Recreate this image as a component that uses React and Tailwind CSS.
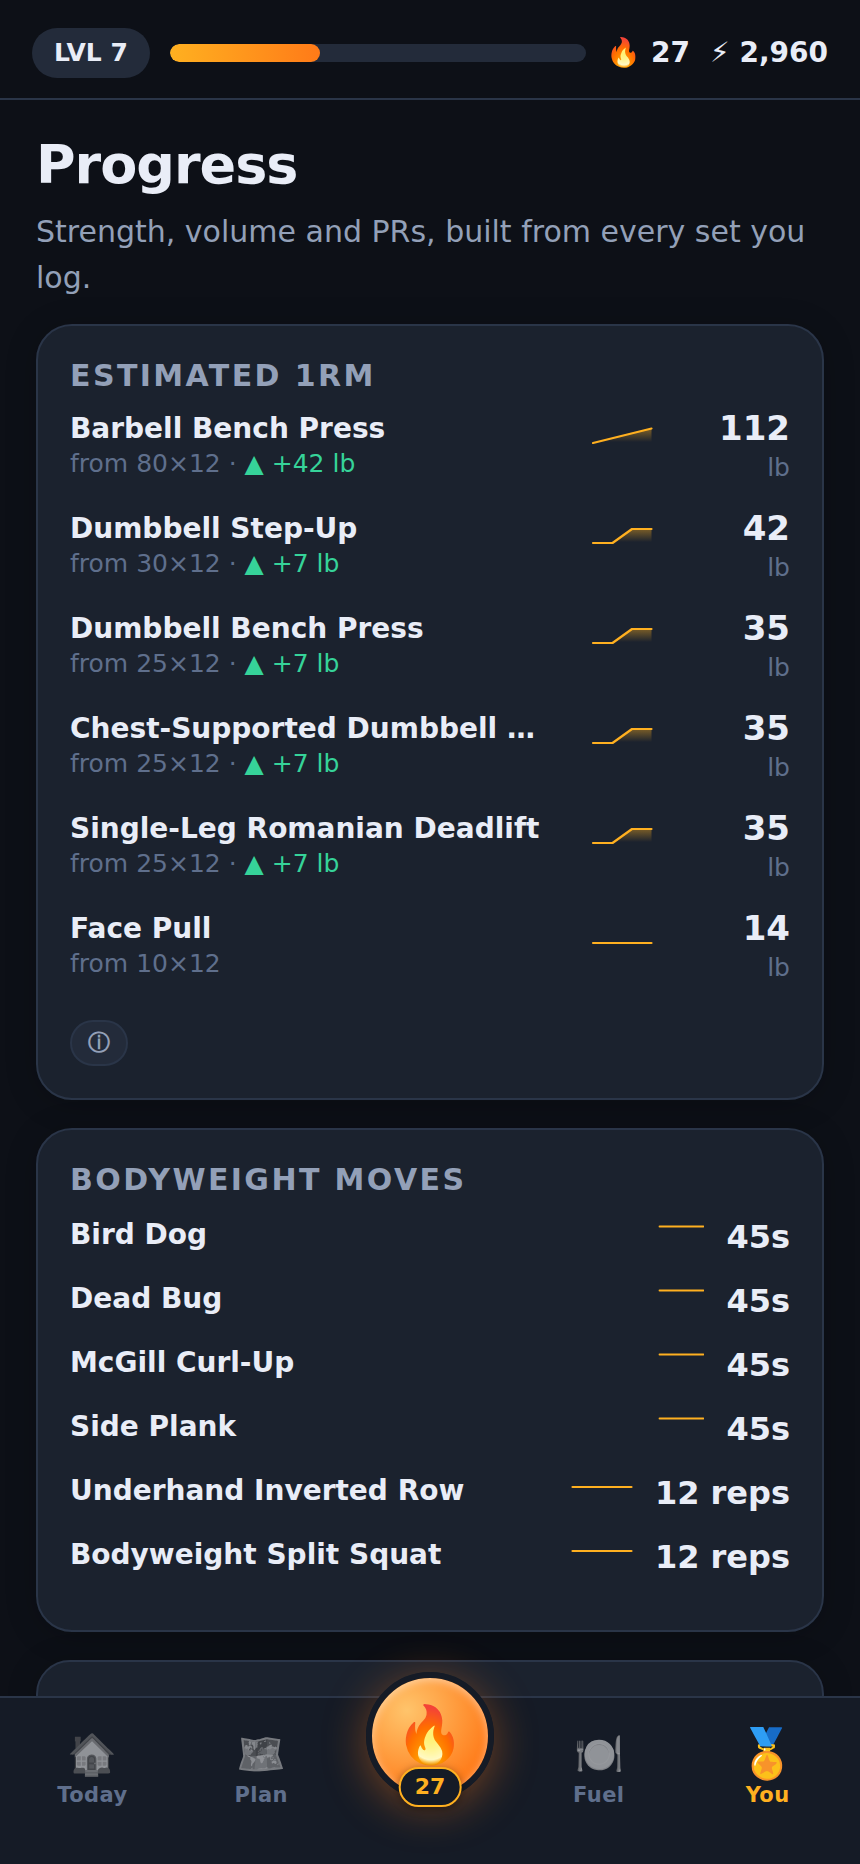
const lifts = [
  { name: 'Barbell Bench Press', from: '80×12', gain: '+42 lb', value: 112, shape: 'rise' },
  { name: 'Dumbbell Step-Up', from: '30×12', gain: '+7 lb', value: 42, shape: 'step' },
  { name: 'Dumbbell Bench Press', from: '25×12', gain: '+7 lb', value: 35, shape: 'step' },
  { name: 'Chest-Supported Dumbbell Row', from: '25×12', gain: '+7 lb', value: 35, shape: 'step' },
  { name: 'Single-Leg Romanian Deadlift', from: '25×12', gain: '+7 lb', value: 35, shape: 'step' },
  { name: 'Face Pull', from: '10×12', gain: null, value: 14, shape: 'flat' },
];

const moves = [
  { name: 'Bird Dog', value: '45s' },
  { name: 'Dead Bug', value: '45s' },
  { name: 'McGill Curl-Up', value: '45s' },
  { name: 'Side Plank', value: '45s' },
  { name: 'Underhand Inverted Row', value: '12 reps', wide: true },
  { name: 'Bodyweight Split Squat', value: '12 reps', wide: true },
];

const shapes = {
  rise: '23,33 81.5,18.5',
  step: '23,33 42.5,33 62,19 81.5,19',
  flat: '23,33 81.5,33',
};

function Spark({ shape }) {
  return (
    <svg className="h-11 w-[104px] shrink-0" viewBox="0 0 104 44" fill="none" aria-hidden="true">
      <defs>
        <linearGradient id="spark-fade" gradientUnits="userSpaceOnUse" x1="0" y1="18" x2="0" y2="32">
          <stop offset="0" stopColor="#ffb020" stopOpacity="0.45" />
          <stop offset="1" stopColor="#ffb020" stopOpacity="0" />
        </linearGradient>
      </defs>
      {shape !== 'flat' && <polygon points={shapes[shape] + ' 81.5,33 23,33'} fill="url(#spark-fade)" />}
      <polyline points={shapes[shape]} stroke="#ffb020" strokeWidth="2.2" strokeLinecap="round" strokeLinejoin="round" />
    </svg>
  );
}

function Card({ title, children }) {
  return (
    <section className="rounded-[36px] border-2 border-[#2a3548] bg-[#1b222e] p-8 shadow-[0_4px_32px_rgba(0,0,0,0.2)]">
      {title && (
        <h2 className="mb-4 text-[30px] leading-9 font-bold tracking-[0.08em] text-[#93a0b8] uppercase">{title}</h2>
      )}
      {children}
    </section>
  );
}

function Tab({ icon, label, active }) {
  return (
    <a
      href={'#' + label.toLowerCase()}
      aria-current={active ? 'page' : undefined}
      className={
        'flex flex-1 flex-col items-center gap-[3px] pt-[30px] text-[21px] leading-6 font-bold tracking-[0.02em] ' +
        (active ? 'text-[#ffb020]' : 'text-[#5f6f8c]')
      }
    >
      <span className={'h-[52px] ' + (active ? 'text-[48px] leading-[50px]' : 'text-[40px] leading-[52px] opacity-55 grayscale')}>
        {icon}
      </span>
      {label}
    </a>
  );
}

export default function App() {
  return (
    <div className="flex h-screen flex-col overflow-hidden bg-[#0d1017] font-['DejaVu_Sans',sans-serif] text-[#e9edf7]">
      <header className="flex items-center gap-5 border-b-2 border-[#2a3548] px-8 pt-7 pb-5">
        <span className="rounded-full bg-[#232b3a] px-[22px] text-[25px] leading-[50px] font-bold">LVL 7</span>
        <div className="h-[18px] flex-1 overflow-hidden rounded-full bg-[#232b3a]">
          <div className="h-full w-[36%] rounded-full bg-linear-to-r from-[#ffb020] to-[#ff7a18]" />
        </div>
        <div className="flex gap-5 text-[28px] leading-9 font-bold">
          <span>🔥 27</span>
          <span>⚡︎ 2,960</span>
        </div>
      </header>

      <main className="min-h-0 flex-1 overflow-hidden px-9 pt-8">
        <h1 className="text-[54px] leading-[66px] font-bold tracking-[-1px]">Progress</h1>
        <p className="mt-[11px] mb-[23px] text-[30px] leading-[46px] text-[#93a0b8]">
          Strength, volume and PRs, built from every set you log.
        </p>

        <div className="flex flex-col gap-7">
          <Card title="Estimated 1RM">
            <ul className="flex flex-col gap-5">
              {lifts.map((lift) => (
                <li key={lift.name} className="flex gap-6">
                  <div className="min-w-0 flex-1">
                    <div className="truncate text-[28px] leading-[38px] font-bold">{lift.name}</div>
                    <div className="text-[25px] leading-8 text-[#5f6f8c]">
                      from {lift.from}
                      {lift.gain && (
                        <>
                          {' · '}
                          <span className="text-[#36d399]">▲ {lift.gain}</span>
                        </>
                      )}
                    </div>
                  </div>
                  <Spark shape={lift.shape} />
                  <div className="w-[92px] text-right">
                    <div className="text-[34px] leading-9 font-bold">{lift.value}</div>
                    <div className="text-[25px] leading-11 text-[#5f6f8c]">lb</div>
                  </div>
                </li>
              ))}
            </ul>
            <button
              type="button"
              aria-label="About estimated 1RM"
              className="mt-[30px] flex h-[46px] items-center rounded-full border-2 border-[#2a3548] bg-[#232b3a] px-4 text-[22px] leading-10 font-bold text-[#93a0b8]"
            >
              ⓘ
            </button>
          </Card>

          <Card title="Bodyweight moves">
            <ul className="flex flex-col">
              {moves.map((move) => (
                <li key={move.name} className="flex h-16 items-start gap-[22px]">
                  <span className="flex-1 truncate pt-[3px] text-[28px] leading-9 font-bold">{move.name}</span>
                  <svg
                    className={move.wide ? 'h-9 w-[62px]' : 'h-9 w-12'}
                    viewBox={move.wide ? '0 0 62 36' : '0 0 48 36'}
                    aria-hidden="true"
                  >
                    <path
                      d={move.wide ? 'M1.5 17H60.5' : 'M3.5 12.5H47.5'}
                      stroke="#ffb020"
                      strokeWidth={move.wide ? 2.2 : 1.8}
                      strokeLinecap="round"
                    />
                  </svg>
                  <span className="pt-[5px] text-[32px] leading-9 font-bold">{move.value}</span>
                </li>
              ))}
            </ul>
          </Card>

          <Card />
        </div>
      </main>

      <nav className="relative z-10 flex h-[168px] shrink-0 border-t-2 border-[#2a3548] bg-[#151b26] px-2">
        <Tab icon="🏠" label="Today" />
        <Tab icon="🗺️" label="Plan" />
        <div className="flex flex-1 justify-center">
          <button
            type="button"
            aria-label="Streak, 27 days"
            className="relative -mt-[26px] flex size-32 items-center justify-center rounded-full border-6 border-[#151b26] bg-[radial-gradient(circle_at_32%_30%,#ffc46b,#ff7a18_72%)] bg-origin-border pb-0.5 text-[56px] leading-none shadow-[0_8px_44px_rgba(255,122,24,0.4),inset_0_2px_8px_rgba(255,255,255,0.5)]"
          >
            🔥
            <span className="absolute -bottom-[13px] left-1/2 flex h-10 -translate-x-1/2 items-center rounded-full border-2 border-[#ffb020] bg-[#151b26] px-3.5 text-[22px] font-bold text-[#ffb020] shadow-[0_2px_8px_rgba(0,0,0,0.4)]">
              27
            </span>
          </button>
        </div>
        <Tab icon="🍽️" label="Fuel" />
        <Tab icon="🏅" label="You" active />
      </nav>
    </div>
  );
}
